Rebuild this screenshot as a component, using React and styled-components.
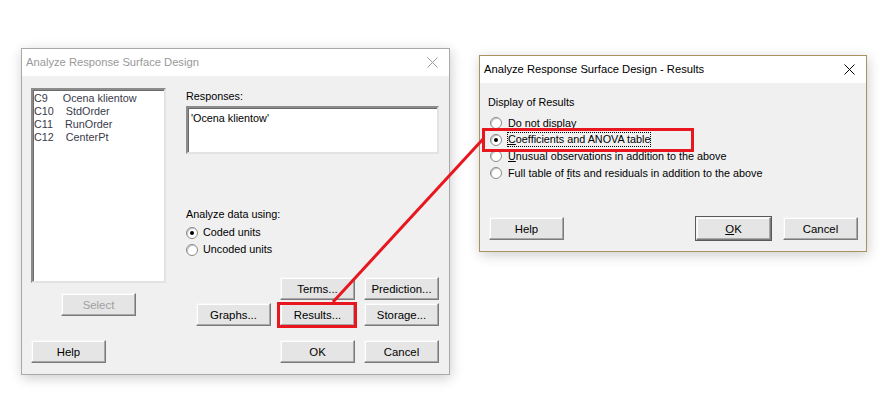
import { createGlobalStyle, styled } from "styled-components";

const GlobalStyle = createGlobalStyle`
  html, body {
    margin: 0;
    padding: 0;
    background: #fff;
  }
  body {
    font-family: "Liberation Sans", Arial, sans-serif;
  }
`;

const Desktop = styled.div`
  position: relative;
  width: 879px;
  height: 397px;
  overflow: hidden;
  background: #fff;
`;

const Window = styled.div`
  position: absolute;
  left: ${(p) => p.$x}px;
  top: ${(p) => p.$y}px;
  width: ${(p) => p.$w}px;
  height: ${(p) => p.$h}px;
  box-sizing: border-box;
  border: 1px solid ${(p) => (p.$active ? "#a8935f" : "#a9a9a9")};
  background: #f0f0f0;
  box-shadow: 1px 3px 12px rgba(0, 0, 0, 0.2);
  display: flex;
  flex-direction: column;
  font-size: 10.8px;
  color: #000;
`;

const TitleBar = styled.div`
  height: 27px;
  flex-shrink: 0;
  background: #fff;
  display: flex;
  align-items: center;
  justify-content: space-between;
  padding: 0 11px 1px 4px;
  box-sizing: border-box;
  font-size: 11.2px;
  color: ${(p) => (p.$active ? "#000" : "#999")};
`;

const CloseIcon = ({ color }) => (
  <svg width="11" height="11" viewBox="0 0 11 11">
    <path d="M0.5 0.5 L10.5 10.5 M10.5 0.5 L0.5 10.5" stroke={color} strokeWidth="1" />
  </svg>
);

const MainBody = styled.div`
  flex: 1;
  display: flex;
  flex-direction: column;
  padding: 12px 10px 10px 9px;
`;

const TopArea = styled.div`
  display: flex;
  align-items: flex-start;
`;

const LeftCol = styled.div`
  width: 135px;
  display: flex;
  flex-direction: column;
  align-items: center;
`;

const Sunken = styled.div`
  box-sizing: border-box;
  background: #fff;
  border: 2px solid;
  border-color: #8c8c8c #e3e3e3 #e3e3e3 #8c8c8c;
  box-shadow: inset 1px 1px 0 #6b6b6b;
`;

const ListBox = styled(Sunken)`
  width: 135px;
  height: 195px;
  padding: 2px 0 0 1px;
`;

const ListItem = styled.div`
  line-height: 13px;
  white-space: pre;
  color: #3a3a4a;
`;

const TextBox = styled(Sunken)`
  margin-top: 3px;
  height: 48px;
  padding: 4px 3px;
  line-height: 13px;
`;

const RightCol = styled.div`
  flex: 1;
  margin-left: 20px;
  display: flex;
  flex-direction: column;
`;

const Label = styled.div`
  line-height: 14px;
  margin-top: ${(p) => p.$mt || 0}px;
  margin-bottom: ${(p) => p.$mb || 0}px;
`;

const RadioRow = styled.div`
  position: relative;
  display: flex;
  align-items: center;
  height: ${(p) => p.$h || 17}px;
`;

const RadioCircle = styled.span`
  box-sizing: border-box;
  width: 12px;
  height: 12px;
  border-radius: 50%;
  border: 1px solid #8a8a8a;
  background: radial-gradient(circle at 60% 60%, #fff 55%, #e4e4e4 100%);
  box-shadow: inset 1px 1px 0 #c8c8c8;
  display: flex;
  align-items: center;
  justify-content: center;
  margin-left: ${(p) => p.$ml || 0}px;
  margin-right: ${(p) => p.$gap || 5}px;
  &::after {
    content: "";
    width: 4px;
    height: 4px;
    border-radius: 50%;
    background: #000;
    display: ${(p) => (p.$checked ? "block" : "none")};
  }
`;

const RadioText = styled.span`
  line-height: 13px;
  outline: ${(p) => (p.$focus ? "1px dotted #000" : "none")};
  outline-offset: 0;
`;

const Highlight = styled.span`
  position: absolute;
  top: ${(p) => p.$t}px;
  left: ${(p) => p.$l}px;
  right: ${(p) => p.$r}px;
  bottom: ${(p) => p.$b}px;
  border: 3px solid #e8161e;
  pointer-events: none;
  z-index: 2;
`;

const Button = styled.div`
  position: relative;
  box-sizing: border-box;
  width: 75px;
  height: 23px;
  background: #e5e5e5;
  border: 1px solid;
  border-color: #f4f4f4 #7a7a7a #7a7a7a #f4f4f4;
  box-shadow: inset -1px -1px 0 #a8a8a8, inset 1px 1px 0 #fff;
  outline: ${(p) => (p.$default ? "1px solid #5a5a5a" : "none")};
  outline-offset: 0;
  display: flex;
  align-items: center;
  justify-content: center;
  color: ${(p) => (p.$disabled ? "#a0a0a0" : "#000")};
  font-size: 11.4px;
  margin-top: ${(p) => p.$mt || 0}px;
  margin-left: ${(p) => p.$ml || 0}px;
`;

const ButtonGrid = styled.div`
  margin-top: 19px;
  align-self: flex-end;
  display: grid;
  grid-template-columns: repeat(3, 75px);
  column-gap: 9px;
  row-gap: 3px;
`;

const ButtonRow = styled.div`
  display: flex;
  justify-content: space-between;
  align-items: center;
  margin-top: ${(p) => p.$mt || 0}px;
`;

const ButtonGroup = styled.div`
  display: flex;
  gap: ${(p) => p.$gap || 9}px;
`;

const ResultsBody = styled.div`
  flex: 1;
  display: flex;
  flex-direction: column;
  padding: 12px 8px 10px 8px;
`;

const Connector = styled.svg`
  position: absolute;
  left: 0;
  top: 0;
  pointer-events: none;
  z-index: 5;
`;

function Radio({ checked, label, ml, gap, h, focus, children }) {
  return (
    <RadioRow $h={h}>
      <RadioCircle $checked={checked} $ml={ml} $gap={gap} />
      <RadioText $focus={focus}>{label}</RadioText>
      {children}
    </RadioRow>
  );
}

export default function App() {
  return (
    <Desktop>
      <GlobalStyle />

      <Window $x={21} $y={48} $w={429} $h={327}>
        <TitleBar>
          <span>Analyze Response Surface Design</span>
          <CloseIcon color="#999" />
        </TitleBar>
        <MainBody>
          <TopArea>
            <LeftCol>
              <ListBox>
                <ListItem>{"C9     Ocena klientow"}</ListItem>
                <ListItem>{"C10    StdOrder"}</ListItem>
                <ListItem>{"C11    RunOrder"}</ListItem>
                <ListItem>{"C12    CenterPt"}</ListItem>
              </ListBox>
              <Button $disabled $mt={10}>Select</Button>
            </LeftCol>
            <RightCol>
              <Label $mt={1}>Responses:</Label>
              <TextBox>'Ocena klientow'</TextBox>
              <Label $mt={53} $mb={3}>Analyze data using:</Label>
              <Radio checked label="Coded units" />
              <Radio label="Uncoded units" />
              <ButtonGrid>
                <span />
                <Button>Terms...</Button>
                <Button>Prediction...</Button>
                <Button>Graphs...</Button>
                <Button>
                  Results...
                  <Highlight $t={-2} $l={-4} $r={-3} $b={-3} />
                </Button>
                <Button>Storage...</Button>
              </ButtonGrid>
            </RightCol>
          </TopArea>
          <ButtonRow $mt={14}>
            <Button>Help</Button>
            <ButtonGroup>
              <Button>OK</Button>
              <Button>Cancel</Button>
            </ButtonGroup>
          </ButtonRow>
        </MainBody>
      </Window>

      <Window $active $x={479} $y={55} $w={388} $h={197}>
        <TitleBar $active>
          <span>Analyze Response Surface Design - Results</span>
          <CloseIcon color="#000" />
        </TitleBar>
        <ResultsBody>
          <Label $mb={6}>Display of Results</Label>
          <Radio h={16.6} ml={2} gap={6} label="Do not display" />
          <Radio
            h={16.6}
            ml={2}
            gap={6}
            checked
            focus
            label={
              <>
                <u>C</u>oefficients and ANOVA table
              </>
            }
          >
            <Highlight $t={-4} $l={-6} $r={164} $b={-4} />
          </Radio>
          <Radio
            h={16.6}
            ml={2}
            gap={6}
            label={
              <>
                <u>U</u>nusual observations in addition to the above
              </>
            }
          />
          <Radio
            h={16.6}
            ml={2}
            gap={6}
            label={
              <>
                Full table of <u>f</u>its and residuals in addition to the above
              </>
            }
          />
          <ButtonRow $mt={36}>
            <Button $ml={1}>Help</Button>
            <ButtonGroup $gap={12}>
              <Button $default>
                <span>
                  <u>O</u>K
                </span>
              </Button>
              <Button>Cancel</Button>
            </ButtonGroup>
          </ButtonRow>
        </ResultsBody>
      </Window>

      <Connector width="879" height="397" viewBox="0 0 879 397">
        <line x1="333" y1="302" x2="484" y2="138" stroke="#e8161e" strokeWidth="3" />
      </Connector>
    </Desktop>
  );
}
